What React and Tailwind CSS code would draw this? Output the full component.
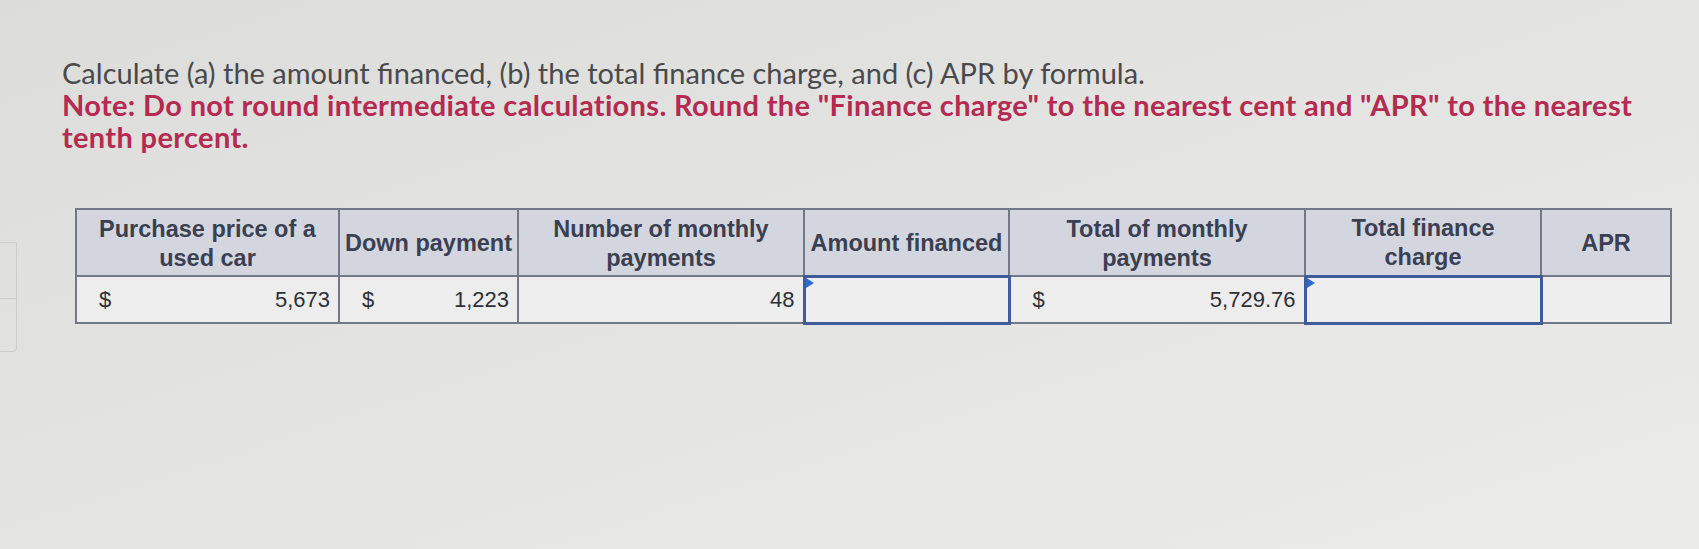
import React from 'react';

const headers = [
  { label: ['Purchase price of a', 'used car'], w: 'w-[263px]' },
  { label: ['Down payment'], w: 'w-[179px]' },
  { label: ['Number of monthly', 'payments'], w: 'w-[286px]' },
  { label: ['Amount financed'], w: 'w-[205px]' },
  { label: ['Total of monthly', 'payments'], w: 'w-[296px]' },
  { label: ['Total finance', 'charge'], w: 'w-[236px]' },
  { label: ['APR'], w: 'w-[130px]' },
];

const MoneyCell = ({ value }) => (
  <td className="border-2 border-[#737887] bg-[#ecedec] h-[47px] px-[8px]">
    <div className="flex justify-between items-center pl-[14px]">
      <span>$</span>
      <span>{value}</span>
    </div>
  </td>
);

const InputCell = () => (
  <td className="relative border-[3px] border-[#3f5b9c] bg-[#edeeed] h-[47px]">
    <span className="absolute left-0 top-0 w-0 h-0 border-l-[8px] border-l-[#2f6bcc] border-y-[5px] border-y-transparent" />
  </td>
);

export default function App() {
  return (
    <div className="min-h-[549px] w-full bg-gradient-to-br from-[#dcdcda] via-[#e4e4e2] to-[#ebebe9] pt-[57px] font-['Lato','Liberation_Sans',sans-serif]">
      <div className="pl-[62px] text-[29px] leading-[32px]">
        <p className="text-[#4a4a4c]">
          Calculate (a) the amount financed, (b) the total finance charge, and (c) APR by formula.
        </p>
        <p className="font-bold text-[#b42a50] tracking-[0.35px]">
          Note: Do not round intermediate calculations. Round the "Finance charge" to the nearest cent and "APR" to the nearest
          <br />
          tenth percent.
        </p>
      </div>

      <div className="mt-[55px] flex items-start">
        <div className="mt-[34px] w-[17px] border-y border-r border-[#cdcdcb] rounded-br-[4px]">
          <div className="h-[56px] border-b border-[#cdcdcb]" />
          <div className="h-[52px]" />
        </div>
        <table className="ml-[58px] border-collapse table-fixed font-['Liberation_Sans',Arial,sans-serif] text-[22px] text-[#2f3035]">
          <thead>
            <tr>
              {headers.map((h, i) => (
                <th
                  key={i}
                  className={`${h.w} h-[67px] border-2 border-[#737887] bg-[#d3d6de] font-bold text-[23.5px] text-[#3a4052] leading-[29px] text-center align-middle pt-[2px]`}
                >
                  {h.label.map((l, j) => (
                    <div key={j}>{l}</div>
                  ))}
                </th>
              ))}
            </tr>
          </thead>
          <tbody>
            <tr>
              <MoneyCell value="5,673" />
              <MoneyCell value="1,223" />
              <td className="border-2 border-[#737887] bg-[#ecedec] h-[47px] px-[8px] text-right">48</td>
              <InputCell />
              <MoneyCell value="5,729.76" />
              <InputCell />
              <td className="border-2 border-[#737887] bg-[#edeeed] h-[47px]" />
            </tr>
          </tbody>
        </table>
      </div>
    </div>
  );
}
